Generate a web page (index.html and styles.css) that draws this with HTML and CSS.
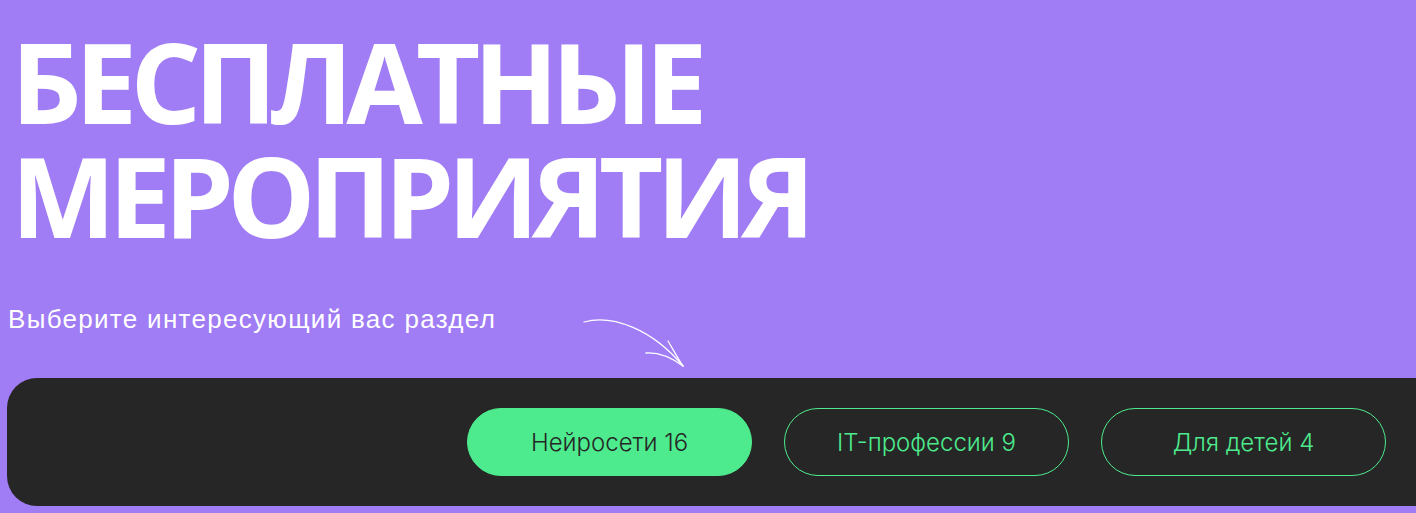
FILE: index.html
```html
<!DOCTYPE html>
<html lang="ru">
<head>
<meta charset="utf-8">
<title>Бесплатные мероприятия</title>
<link rel="stylesheet" href="styles.css">
</head>
<body>
<section class="hero">
  <h1 class="hero-title">БЕСПЛАТНЫЕ<br>МЕРОПРИЯТИЯ</h1>
  <div class="intro">
    <p class="intro-text">Выберите интересующий вас раздел</p>
    <svg class="intro-arrow" width="110" height="56" viewBox="0 0 110 56" fill="none" stroke="#ffffff" stroke-width="1.3" stroke-linecap="round">
      <path d="M2 5 C 30 -3, 70 12, 101 49"/>
      <path d="M86 24 C 92 34, 96 42, 101 49"/>
      <path d="M64 36 C 78 35, 90 41, 101 49"/>
    </svg>
  </div>
  <nav class="tabs">
    <a class="tab tab-active" href="#">Нейросети 16</a>
    <a class="tab" href="#">IT-профессии 9</a>
    <a class="tab" href="#">Для детей 4</a>
  </nav>
</section>
</body>
</html>
```
FILE: styles.css
```css
html, body {
  margin: 0;
  padding: 0;
}
body {
  background: #a07cf5;
  overflow: hidden;
}
.hero {
  display: flex;
  flex-direction: column;
  padding-left: 7px;
}
.hero-title {
  margin: 24px 0 0 4px;
  font-family: "Open Sans", sans-serif;
  font-weight: 700;
  font-size: 111px;
  line-height: 114px;
  color: #ffffff;
  letter-spacing: -6.8px;
}
.intro {
  position: relative;
  margin-top: 53px;
  height: 73px;
}
.intro-text {
  margin: 0 0 0 1px;
  font-family: "Liberation Sans", Arial, sans-serif;
  font-size: 26px;
  line-height: 29px;
  letter-spacing: 1.3px;
  color: #ffffff;
}
.intro-arrow {
  position: absolute;
  left: 575px;
  top: 12px;
}
.tabs {
  display: flex;
  justify-content: flex-end;
  align-items: center;
  gap: 32px;
  height: 128px;
  padding-right: 30px;
  background: #262626;
  border-radius: 30px 0 0 30px;
}
.tab {
  box-sizing: border-box;
  display: flex;
  align-items: center;
  justify-content: center;
  width: 285px;
  height: 68px;
  border: 1px solid #4deb8d;
  border-radius: 34px;
  font-family: Inter, sans-serif;
  font-weight: 300;
  font-size: 24px;
  color: #4deb8d;
  text-decoration: none;
}
.tab-active {
  background: #4deb8d;
  color: #262626;
}
```
